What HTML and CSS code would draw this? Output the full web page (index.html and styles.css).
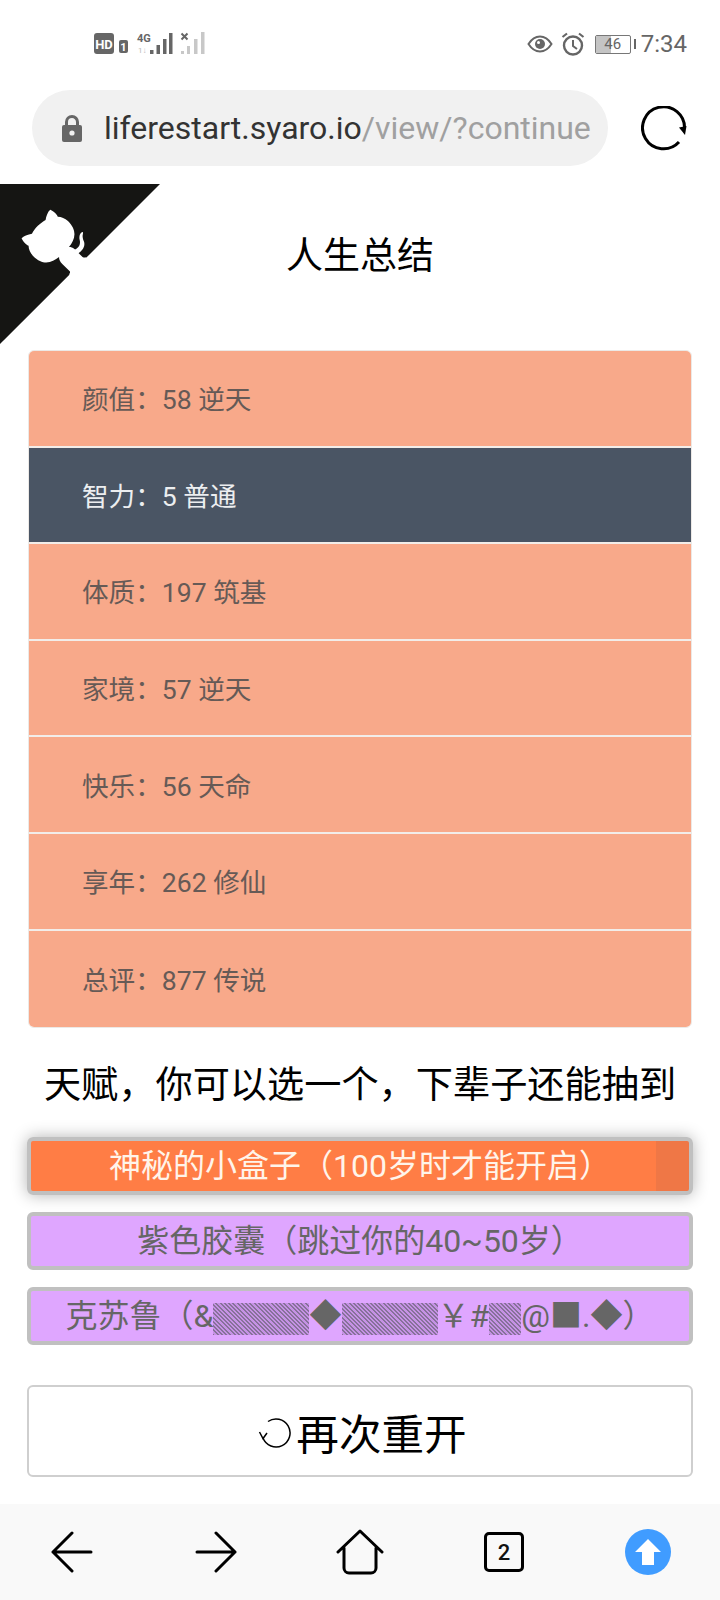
FILE: index.html
```html
<!DOCTYPE html>
<html lang="zh">
<head>
<meta charset="utf-8">
<title>人生总结</title>
<link rel="stylesheet" href="styles.css">
</head>
<body>
<div class="status">
  <div class="status-left">
    <svg class="sig" width="112" height="26" viewBox="0 0 112 26">
      <rect x="0" y="3" width="20" height="21" rx="3" fill="#666"/>
      <text x="10" y="18.500" class="t-hd" text-anchor="middle">HD</text>
      <rect x="25" y="10" width="9" height="13" rx="2" fill="#666"/>
      <text x="29.500" y="21" class="t-one" text-anchor="middle">1</text>
      <text x="43" y="12" class="t-4g">4G</text>
      <text x="44" y="23" class="t-speed">1↓</text>
      <g fill="#666"><rect x="56" y="20" width="3.500" height="4"/><rect x="62.500" y="15" width="3.500" height="9"/><rect x="69" y="9" width="3.500" height="15"/><rect x="75" y="3" width="3.500" height="21"/></g>
      <path d="M87.500 3.500l6 6M93.500 3.500l-6 6" stroke="#666" stroke-width="2"/>
      <g fill="#c8c8c8"><rect x="87" y="21" width="3" height="3"/><rect x="93" y="16" width="3" height="8"/><rect x="100" y="9" width="3.500" height="15"/><rect x="107" y="2" width="3.500" height="22"/></g>
    </svg>
  </div>
  <div class="status-right">
    <svg class="eye" width="26" height="18" viewBox="0 0 26 18"><path d="M1.500 9C5 3.500 9 1.500 13 1.500S21 3.500 24.500 9C21 14.500 17 16.500 13 16.500S5 14.500 1.500 9Z" fill="none" stroke="#666" stroke-width="2"/><circle cx="13" cy="9" r="5" fill="#666"/><circle cx="11.500" cy="7.500" r="1.500" fill="#fff"/></svg>
    <svg class="alarm" width="24" height="24" viewBox="0 0 24 24"><circle cx="12" cy="13.500" r="9" fill="none" stroke="#666" stroke-width="2.400"/><path d="M12 8v6l4 3" fill="none" stroke="#666" stroke-width="2"/><path d="M1.500 5L6 1.500M22.500 5L18 1.500" stroke="#666" stroke-width="2.200"/></svg>
    <div class="battery"><span class="battery-fill"></span><span class="battery-num">46</span></div>
    <span class="battery-tip"></span>
    <span class="clock">7:34</span>
  </div>
</div>

<div class="browser">
  <div class="url-pill">
    <svg class="lock" width="20" height="27" viewBox="0 0 20 27"><path d="M4.500 11V7a5.500 5.500 0 0 1 11 0v4" fill="none" stroke="#666" stroke-width="3"/><rect x="0" y="10" width="20" height="17" rx="2" fill="#666"/><circle cx="10" cy="18" r="2.600" fill="#f1f1f1"/></svg>
    <span class="url"><span class="host">liferestart.syaro.io</span><span class="path">/view/?continue</span></span>
  </div>
  <svg class="reload" width="46" height="46" viewBox="0 0 46 46"><path d="M38 36A21 21 0 1 1 43.500 23" fill="none" stroke="#000" stroke-width="3"/><path d="M38 21.500l7.500-1.500-1.500 9Z" fill="#000"/></svg>
</div>

<main class="page">
  <svg class="corner" width="160" height="160" viewBox="0 0 250 250" aria-hidden="true">
    <g transform="translate(250 0) scale(-1 1)">
      <path d="M0,0 L115,115 L130,115 L142,142 L250,250 L250,0 Z" fill="#151513"/>
      <path d="M128.3,109.0 C113.8,99.7 119.0,89.6 119.0,89.6 C122.0,82.7 120.5,78.6 120.5,78.6 C119.2,72.0 123.4,76.3 123.4,76.3 C127.3,80.9 125.5,87.3 125.5,87.3 C122.9,97.6 130.6,101.9 134.4,103.2" fill="#fff"/>
      <path d="M115.0,115.0 C114.9,115.1 118.7,116.5 119.8,115.4 L133.7,101.6 C136.9,99.2 139.9,98.4 142.2,98.6 C133.8,88.0 127.5,74.4 143.8,58.0 C148.5,53.4 154.0,51.2 159.7,51.0 C160.3,49.4 163.2,43.6 171.4,40.1 C171.4,40.1 176.1,42.5 178.8,56.2 C183.1,58.6 187.2,61.8 190.9,65.4 C194.5,69.0 197.7,73.2 200.1,77.6 C213.8,80.2 216.3,84.9 216.3,84.9 C212.7,93.1 206.9,96.0 205.4,96.6 C205.1,102.4 203.0,107.8 198.3,112.5 C181.9,128.9 168.3,122.5 157.7,114.1 C157.9,116.9 156.7,120.9 152.7,124.9 L141.0,136.5 C139.8,137.7 141.6,141.9 141.8,141.8 Z" fill="#fff"/>
    </g>
  </svg>

  <h1 class="title">人生总结</h1>

  <ul class="summary">
    <li class="row">颜值：58 逆天</li>
    <li class="row dark">智力：5 普通</li>
    <li class="row">体质：197 筑基</li>
    <li class="row">家境：57 逆天</li>
    <li class="row">快乐：56 天命</li>
    <li class="row">享年：262 修仙</li>
    <li class="row">总评：877 传说</li>
  </ul>

  <h2 class="subtitle">天赋，你可以选一个，下辈子还能抽到</h2>

  <ul class="talents">
    <li class="talent orange">神秘的小盒子（100岁时才能开启）</li>
    <li class="talent">紫色胶囊（跳过你的40~50岁）</li>
    <li class="talent">克苏鲁（&amp;<span class="shade">▒▒▒</span>◆<span class="shade">▒▒▒</span>￥#<span class="shade">▒</span>@■.◆）</li>
  </ul>

  <button class="again"><svg class="again-icon" width="34" height="34" viewBox="0 0 34 34"><path d="M10 5.500A14 14 0 1 1 5 22" fill="none" stroke="#000" stroke-width="1.500"/><path d="M1.500 16l3.500 6.500 4-5.500" fill="none" stroke="#000" stroke-width="1.500"/></svg>再次重开</button>
</main>

<nav class="nav">
  <svg width="44" height="42" viewBox="0 0 44 42"><path d="M22 2L3 21l19 19M3 21h38" fill="none" stroke="#000" stroke-width="3" stroke-linecap="round" stroke-linejoin="round"/></svg>
  <svg width="44" height="42" viewBox="0 0 44 42"><path d="M22 2l19 19-19 19M41 21H3" fill="none" stroke="#000" stroke-width="3" stroke-linecap="round" stroke-linejoin="round"/></svg>
  <svg width="48" height="46" viewBox="0 0 48 46"><path d="M2 23L24 2l22 21M8 19v20a5 5 0 0 0 5 5h22a5 5 0 0 0 5-5V19" fill="none" stroke="#000" stroke-width="3" stroke-linecap="round" stroke-linejoin="round"/></svg>
  <div class="tabs">2</div>
  <svg width="46" height="46" viewBox="0 0 46 46"><circle cx="23" cy="23" r="23" fill="#409cff"/><path d="M23 10L36 23h-7v13H17V23h-7Z" fill="#fff"/></svg>
</nav>
</body>
</html>
```

FILE: styles.css
```css
* { box-sizing: border-box; }
html, body { margin: 0; padding: 0; }
body {
  width: 720px;
  height: 1600px;
  overflow: hidden;
  display: flex;
  flex-direction: column;
  background: #fff;
  font-family: Roboto, "Noto Sans CJK SC", sans-serif;
}
ul { list-style: none; margin: 0; padding: 0; }

.status {
  height: 90px;
  padding: 30px 33px 0 94px;
  display: flex;
  justify-content: space-between;
  align-items: flex-start;
}
.status-right { display: flex; align-items: center; gap: 6px; color: #666; height: 28px; }
.eye { margin-right: 2px; }
.alarm { margin-right: 4px; }
.sig { display: block; }
.t-hd { font: 700 13px Roboto, sans-serif; fill: #fff; }
.t-one { font: 700 11px Roboto, sans-serif; fill: #fff; }
.t-4g { font: 700 11px Roboto, sans-serif; fill: #666; }
.t-speed { font: 400 8px Roboto, sans-serif; fill: #bbb; }
.battery {
  position: relative;
  width: 36px;
  height: 19px;
  border: 1px solid #777;
  border-radius: 2px;
  overflow: hidden;
  display: flex;
  align-items: center;
  justify-content: center;
}
.battery-fill { position: absolute; left: 0; top: 0; bottom: 0; width: 46%; background: #c4c4c4; }
.battery-num { position: relative; font-size: 15px; color: #666; }
.battery-tip { width: 2px; height: 10px; background: #666; margin-left: -3px; }
.clock { font-size: 24px; color: #666; margin-left: -1px; }

.browser {
  height: 94px;
  padding-left: 32px;
  display: flex;
  align-items: flex-start;
}
.url-pill {
  width: 576px;
  height: 76px;
  border-radius: 38px;
  background: #f1f1f1;
  display: flex;
  align-items: center;
  padding-left: 30px;
  overflow: hidden;
}
.lock { flex: none; }
.url { margin-left: 22px; font-size: 32px; white-space: nowrap; }
.host { color: #333; }
.path { color: #a0a0a0; }
.reload { margin: 16px 0 0 33px; }

.page {
  position: relative;
  flex: 1;
  display: flex;
  flex-direction: column;
  align-items: stretch;
}
.corner { position: absolute; left: 0; top: 0; }
.title {
  margin: 0;
  height: 166px;
  padding-top: 47px;
  text-align: center;
  font-size: 37px;
  line-height: 52px;
  font-weight: 400;
  color: #000;
}
.summary {
  margin: 0 28px;
  border: 1px solid #ece9e6;
  border-radius: 6px;
  overflow: hidden;
}
.row {
  height: 96.6px;
  padding: 0 0 1px 53px;
  display: flex;
  align-items: center;
  font-size: 26.600px;
  color: #665a56;
  background: #f8a98a;
  border-bottom: 2px solid #f2ede9;
}
.row:last-child { border-bottom: 0; }
.row.dark { background: #4a5564; color: #eceef0; }
.subtitle {
  margin: 0;
  height: 109px;
  padding-top: 32px;
  line-height: 50px;
  text-align: center;
  font-size: 37.200px;
  font-weight: 400;
  color: #000;
  white-space: nowrap;
}
.talents {
  margin: 0 27px;
  display: flex;
  flex-direction: column;
  gap: 17px;
}
.talent {
  height: 58px;
  border: 4px solid #c0c0c0;
  border-radius: 6px;
  background: #dfa6ff;
  color: #666;
  font-size: 32px;
  line-height: 50px;
  text-align: center;
  white-space: nowrap;
  overflow: hidden;
}
.shade {
  display: inline-block;
  height: 32px;
  line-height: 32px;
  vertical-align: -3px;
  color: transparent;
  background: repeating-linear-gradient(45deg, #87719a 0, #87719a 1.400px, #c592e4 1.400px, #c592e4 3px);
}
.talent.orange {
  background: linear-gradient(90deg, #ff7d45 0, #ff7d45 95%, #ef7746 95%, #ef7746 100%);
  color: #fff4ea;
  box-shadow: 0 0 16px rgba(0, 0, 0, 0.3);
}
.again {
  display: flex;
  align-items: center;
  justify-content: center;
  margin: 40px 27px 0;
  width: 666px;
  height: 92px;
  border: 2px solid #cfcfcf;
  border-radius: 6px;
  background: #fff;
  color: #000;
  font: 400 42.600px Roboto, "Noto Sans CJK SC", sans-serif;
}
.again-icon { margin: 4px 4px 0 5px; }

.nav {
  height: 96px;
  background: #f9f9f9;
  display: grid;
  grid-template-columns: repeat(5, 144px);
  justify-items: center;
  align-items: center;
}
.tabs {
  width: 40px;
  height: 40px;
  border: 3px solid #000;
  border-radius: 5px;
  font-size: 22px;
  font-weight: 500;
  color: #111;
  display: flex;
  align-items: center;
  justify-content: center;
}
```
